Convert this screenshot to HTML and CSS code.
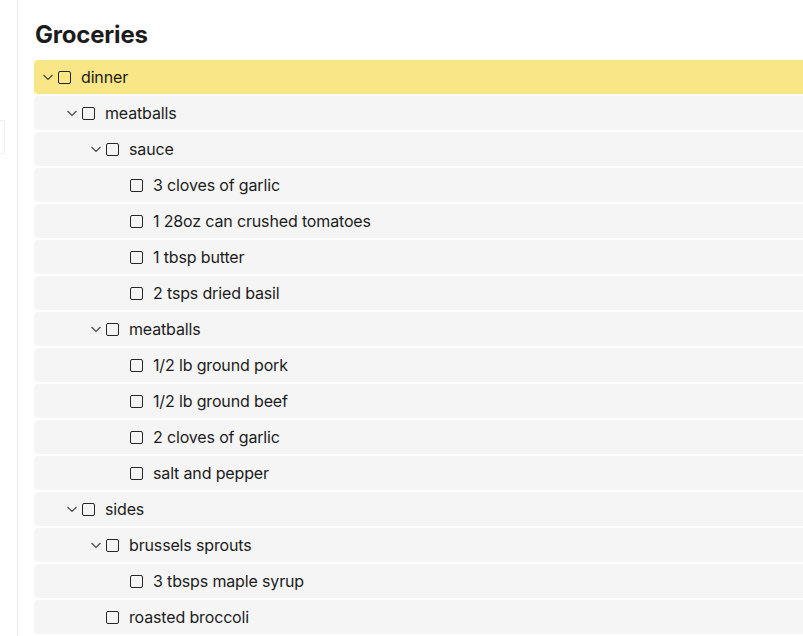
FILE: index.html
```html
<!DOCTYPE html>
<html lang="en">
<head>
    <meta charset="UTF-8">
    <meta name="viewport" content="width=device-width, initial-scale=1.0">
    <title>Groceries</title>
    <link rel="stylesheet" href="styles.css">
</head>
<body>
    <div class="layout">
        <aside class="rail">
            <div class="rail-tab"></div>
        </aside>

        <main class="page">
            <h1>Groceries</h1>

            <div class="tree">
                <div class="row lvl-0 selected">
                    <span class="toggle"><svg viewBox="0 0 12 12"><path d="M1.5 4l4.5 4.5 4.5-4.5"/></svg></span>
                    <span class="check"></span>
                    <span class="label">dinner</span>
                </div>
                <div class="row lvl-1">
                    <span class="toggle"><svg viewBox="0 0 12 12"><path d="M1.5 4l4.5 4.5 4.5-4.5"/></svg></span>
                    <span class="check"></span>
                    <span class="label">meatballs</span>
                </div>
                <div class="row lvl-2">
                    <span class="toggle"><svg viewBox="0 0 12 12"><path d="M1.5 4l4.5 4.5 4.5-4.5"/></svg></span>
                    <span class="check"></span>
                    <span class="label">sauce</span>
                </div>
                <div class="row lvl-3">
                    <span class="toggle"></span>
                    <span class="check"></span>
                    <span class="label">3 cloves of garlic</span>
                </div>
                <div class="row lvl-3">
                    <span class="toggle"></span>
                    <span class="check"></span>
                    <span class="label">1 28oz can crushed tomatoes</span>
                </div>
                <div class="row lvl-3">
                    <span class="toggle"></span>
                    <span class="check"></span>
                    <span class="label">1 tbsp butter</span>
                </div>
                <div class="row lvl-3">
                    <span class="toggle"></span>
                    <span class="check"></span>
                    <span class="label">2 tsps dried basil</span>
                </div>
                <div class="row lvl-2">
                    <span class="toggle"><svg viewBox="0 0 12 12"><path d="M1.5 4l4.5 4.5 4.5-4.5"/></svg></span>
                    <span class="check"></span>
                    <span class="label">meatballs</span>
                </div>
                <div class="row lvl-3">
                    <span class="toggle"></span>
                    <span class="check"></span>
                    <span class="label">1/2 lb ground pork</span>
                </div>
                <div class="row lvl-3">
                    <span class="toggle"></span>
                    <span class="check"></span>
                    <span class="label">1/2 lb ground beef</span>
                </div>
                <div class="row lvl-3">
                    <span class="toggle"></span>
                    <span class="check"></span>
                    <span class="label">2 cloves of garlic</span>
                </div>
                <div class="row lvl-3">
                    <span class="toggle"></span>
                    <span class="check"></span>
                    <span class="label">salt and pepper</span>
                </div>
                <div class="row lvl-1">
                    <span class="toggle"><svg viewBox="0 0 12 12"><path d="M1.5 4l4.5 4.5 4.5-4.5"/></svg></span>
                    <span class="check"></span>
                    <span class="label">sides</span>
                </div>
                <div class="row lvl-2">
                    <span class="toggle"><svg viewBox="0 0 12 12"><path d="M1.5 4l4.5 4.5 4.5-4.5"/></svg></span>
                    <span class="check"></span>
                    <span class="label">brussels sprouts</span>
                </div>
                <div class="row lvl-3">
                    <span class="toggle"></span>
                    <span class="check"></span>
                    <span class="label">3 tbsps maple syrup</span>
                </div>
                <div class="row lvl-2">
                    <span class="toggle"></span>
                    <span class="check"></span>
                    <span class="label">roasted broccoli</span>
                </div>
            </div>
        </main>
    </div>
</body>
</html>
```

FILE: styles.css
```css
* {
    margin: 0;
    padding: 0;
    box-sizing: border-box;
}

body {
    font-family: Inter, 'Noto Sans', sans-serif;
    color: #1c1c1c;
    background: #fff;
    overflow: hidden;
}

.layout {
    display: flex;
    min-height: 100vh;
}

.rail {
    width: 18px;
    flex-shrink: 0;
    border-right: 1px solid #ebebeb;
}

.rail-tab {
    margin-top: 120px;
    width: 5px;
    height: 34px;
    border: 1px solid #f0f0f0;
    border-left: none;
    border-radius: 0 3px 3px 0;
}

.page {
    flex: 1;
    padding: 20px 0 0 16px;
}

h1 {
    font-size: 24px;
    font-weight: 700;
    line-height: 30px;
    margin-left: 1px;
    margin-bottom: 10px;
    letter-spacing: -0.2px;
}

.tree {
    display: flex;
    flex-direction: column;
    gap: 2px;
}

.row {
    height: 34px;
    display: flex;
    align-items: center;
    background: #f5f5f5;
    border-radius: 4px 0 0 4px;
    font-size: 16px;
}

.row.selected {
    background: #f8e687;
}

.lvl-0 { padding-left: 8px; }
.lvl-1 { padding-left: 32px; }
.lvl-2 { padding-left: 56px; }
.lvl-3 { padding-left: 80px; }

.toggle {
    width: 16px;
    height: 12px;
    flex-shrink: 0;
}

.toggle svg {
    width: 12px;
    height: 12px;
    display: block;
    fill: none;
    stroke: #444;
    stroke-width: 1.1;
}

.check {
    width: 13px;
    height: 13px;
    flex-shrink: 0;
    border: 1.6px solid #262626;
    border-radius: 2px;
    margin-right: 10px;
}

.label {
    white-space: nowrap;
    letter-spacing: -0.15px;
}
```
